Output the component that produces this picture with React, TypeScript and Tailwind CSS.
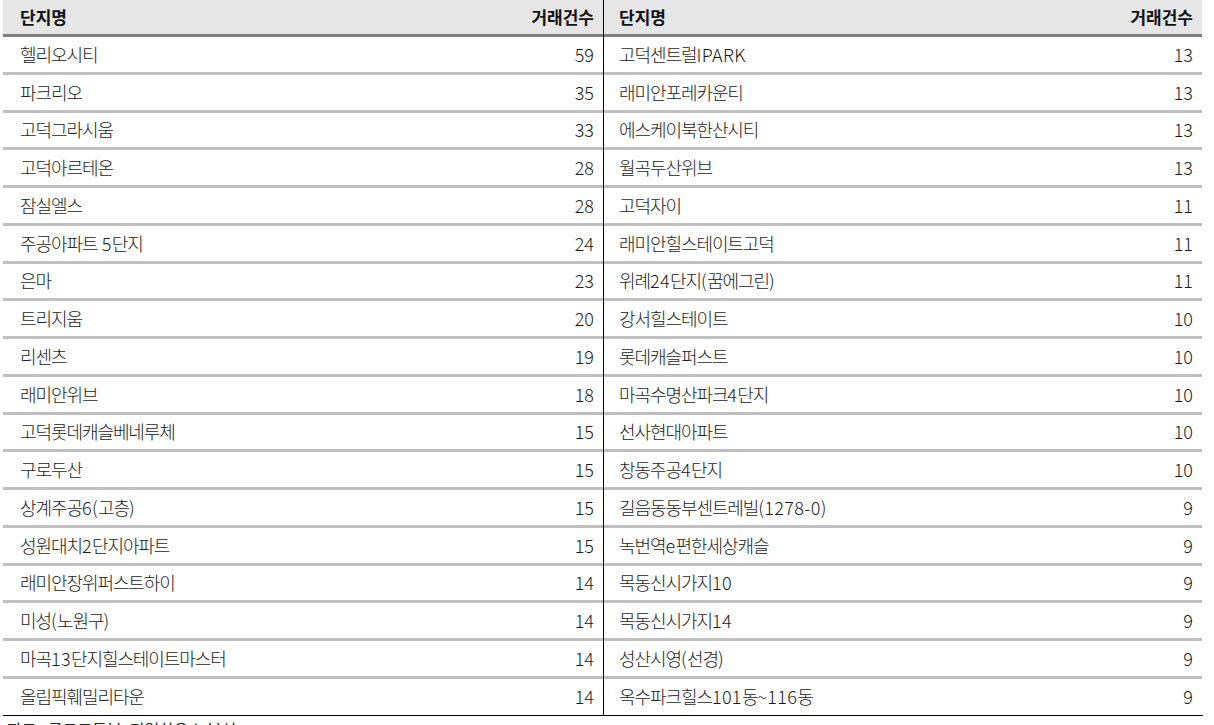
const left: [string, number][] = [
  ["헬리오시티", 59],
  ["파크리오", 35],
  ["고덕그라시움", 33],
  ["고덕아르테온", 28],
  ["잠실엘스", 28],
  ["주공아파트 5단지", 24],
  ["은마", 23],
  ["트리지움", 20],
  ["리센츠", 19],
  ["래미안위브", 18],
  ["고덕롯데캐슬베네루체", 15],
  ["구로두산", 15],
  ["상계주공6(고층)", 15],
  ["성원대치2단지아파트", 15],
  ["래미안장위퍼스트하이", 14],
  ["미성(노원구)", 14],
  ["마곡13단지힐스테이트마스터", 14],
  ["올림픽훼밀리타운", 14],
];

const right: [string, number][] = [
  ["고덕센트럴IPARK", 13],
  ["래미안포레카운티", 13],
  ["에스케이북한산시티", 13],
  ["월곡두산위브", 13],
  ["고덕자이", 11],
  ["래미안힐스테이트고덕", 11],
  ["위례24단지(꿈에그린)", 11],
  ["강서힐스테이트", 10],
  ["롯데캐슬퍼스트", 10],
  ["마곡수명산파크4단지", 10],
  ["선사현대아파트", 10],
  ["창동주공4단지", 10],
  ["길음동동부센트레빌(1278-0)", 9],
  ["녹번역e편한세상캐슬", 9],
  ["목동신시가지10", 9],
  ["목동신시가지14", 9],
  ["성산시영(선경)", 9],
  ["옥수파크힐스101동~116동", 9],
];

// hangul runs are set tighter than digits / latin
function Name({ text }: { text: string }) {
  const parts = text.split(/([가-힣]+)/).filter(Boolean);
  return (
    <span>
      {parts.map((p, i) =>
        /[가-힣]/.test(p) ? (
          <span key={i} className="tracking-[-0.06em]">{p}</span>
        ) : (
          <span key={i} className="tracking-[0.02em]">{p}</span>
        )
      )}
    </span>
  );
}

function Half({ rows, first }: { rows: [string, number][]; first?: boolean }) {
  const pl = first ? "pl-[17px]" : "pl-[15px]";
  return (
    <div className={first ? "w-[601px] border-r border-black" : "w-[598px]"}>
      {/* header */}
      <div
        className={`flex h-[37px] items-center justify-between bg-[#e6e6e6] border-b-[3px] border-[#7f7f7f] ${pl} pr-[9px] font-bold text-[17px] text-[#111]`}
      >
        <span>단지명</span>
        <span>거래건수</span>
      </div>
      {rows.map(([name, n], i) => (
        <div
          key={name}
          className={`flex items-center justify-between ${pl} pr-[9px] ${
            i === rows.length - 1
              ? "h-[36.25px]"
              : "h-[37.75px] border-b-[3px] border-[#c0c0c0]"
          }`}
        >
          <Name text={name} />
          <span>{n}</span>
        </div>
      ))}
    </div>
  );
}

export default function App() {
  return (
    <div
      className="w-[1214px] h-[725px] overflow-hidden bg-white text-[18px] font-light text-[#1a1a1a]"
      style={{ fontFamily: '"Noto Sans CJK KR", "Noto Sans", sans-serif' }}
    >
      <div className="ml-[3px] w-[1200px] flex border-b border-black">
        <Half rows={left} first />
        <Half rows={right} />
      </div>
      <div className="pl-[7px] pt-[1px] text-[16px] leading-[24px] font-normal text-[#222]">
        자료 : 국토교통부, 리얼하우스 분석
      </div>
    </div>
  );
}
